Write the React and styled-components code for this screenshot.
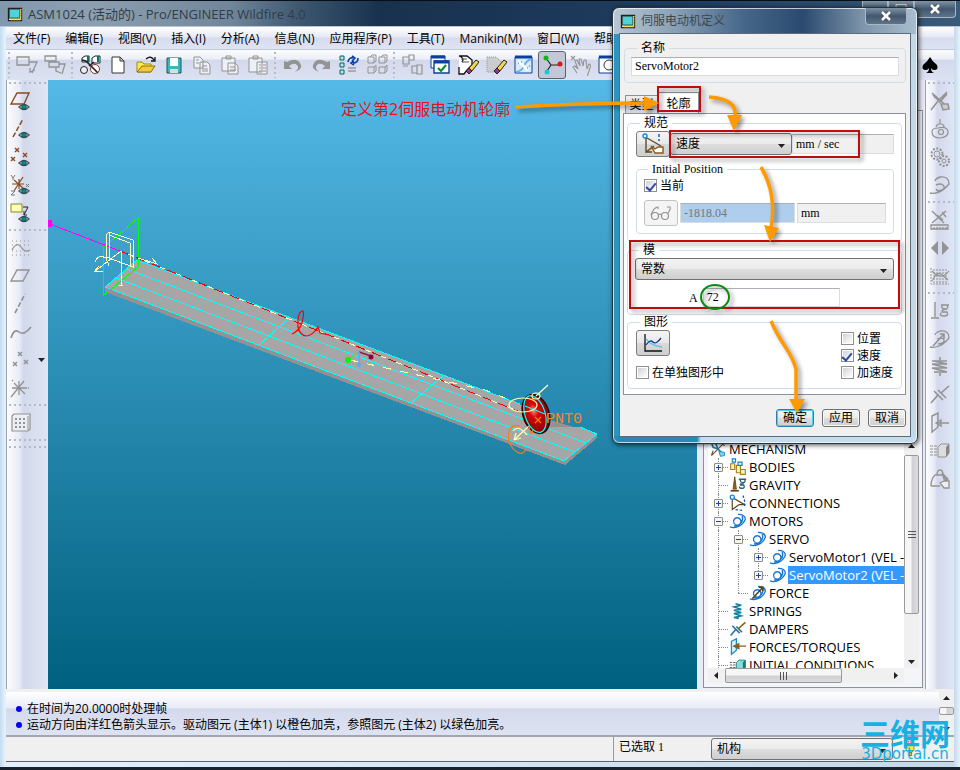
import React from "react";
import styled, { createGlobalStyle, css } from "styled-components";

const UI = `"Open Sans", "Noto Sans CJK SC", sans-serif`;
const FORM = `"Liberation Serif", "Noto Sans CJK SC", serif`;
const LINE = "#8a919c";

const Global = createGlobalStyle`
  * { box-sizing: border-box; }
  html, body { margin: 0; height: 100%; }
  #root { height: 100%; }
  body { font: 12px/16px ${UI}; color: #000; background: #cfe4f5; overflow: hidden; }
  button, input, select { font: inherit; color: inherit; margin: 0; padding: 0; }
  svg { display: block; }
`;

/* ---------- icons ---------- */

const G = "#939393";
const eye = (
  <g>
    <path d="M9 17q5-5 10 0q-5 5-10 0z" fill="#e8eef4" stroke="#555" strokeWidth="1.4" />
    <circle cx="14" cy="17" r="2.4" fill="#078a8a" stroke="#034" strokeWidth=".6" />
  </g>
);
const motorPath = "M1 18q4 2 10 0t9-9q0-6-9-6M10 7a4.500 4.500 0 1 0 .1 0M16 5q2 4-1 8t-9 4";
const drawings = {
  sketchFlat: <path d="M1 3h12v8H1zM13 8h8l-5 11M14 14v4l5-2" fill="none" stroke={G} strokeWidth="1.300" />,
  sketchStack: <path d="M1 2h11v5H1zM5 7v6h10V8H5M15 10h6l-3 10M12 13v4l5 2" fill="none" stroke={G} strokeWidth="1.300" />,
  find: (
    <g stroke="#222">
      <path d="M3 4l3-2h4v6H3zM13 4l3-2h5v7h-8z" fill="#fff" />
      <path d="M9 2v6M19 2v6" stroke="#077" strokeWidth="2" />
      <circle cx="5" cy="16" r="3.500" fill="#eee" />
      <circle cx="16" cy="15" r="4.500" fill="#fff" stroke="#833" />
      <path d="M3 6l4 1 12 12M10 12l5-4" fill="none" strokeWidth="1.600" />
    </g>
  ),
  newFile: <path d="M5 3h8l4 4v12H5zM13 3v4h4" fill="#fff" stroke="#333" />,
  open: (
    <g>
      <path d="M2 18V8h5l2 2h7v8z" fill="#ffe94a" stroke="#a08a10" />
      <path d="M2 18l5-6h13l-4 6z" fill="#f3c93c" stroke="#8a7410" />
      <path d="M11 5q5-4 8 1m1-3v4h-4" fill="none" stroke="#111" strokeWidth="1.300" />
    </g>
  ),
  save: (
    <g>
      <path d="M4 4h14v15H4z" fill="#3cb6be" stroke="#255" />
      <path d="M7 4h8v8H7z" fill="#fff" />
      <path d="M7 15h8v4H7z" fill="#ddd" />
    </g>
  ),
  copy: <path d="M3 3h6l3 3v8H3zM9 8h7l3 3v9H9zM5 6h3M5 9h3M11 12h5M11 15h6M11 17h6" fill="#eef0f6" stroke={G} />,
  paste: <path d="M3 4h13v13H3zM7 2h5v3H7zM9 9h7l3 3v8H9zM11 13h5M11 16h6" fill="#eef0f6" stroke={G} />,
  pasteSpecial: <path d="M2 4h13v14H2zM6 2h5v3H6zM10 8h10v12H10zM12 11h2M16 11h3M12 14h2M16 14h3M12 17h2M16 17h3" fill="#eef0f6" stroke={G} />,
  undo: <path d="M2 7v8h8l-3-3q5-4 8-1t-2 7q9-3 5-9t-13-1z" fill={G} />,
  redo: <path d="M20 7v8h-8l3-3q-5-4-8-1t2 7q-9-3-5-9t13-1z" fill={G} />,
  regenerate: (
    <g>
      <path d="M2 2h4v4H2zM2 9h4v4H2zM2 16h4v4H2z" fill="#bfe3e3" stroke="#066" />
      <path d="M10 8q1-5 5-4m-1-2l3 2-3 3M20 4q0 5-5 5m1-2l-3 2 3 2" fill="none" stroke="#0b3fa8" strokeWidth="1.600" />
      <path d="M10 14h8M10 17h8" stroke="#777" />
    </g>
  ),
  models: <path d="M2 3h6v6H2zM13 3h6v6h-6zM2 13h6v6H2zM13 13h6v6h-6zM4 3l2-2h4v6l-2 2M15 3l2-2h4v6l-2 2M8 13l2-2v6l-2 2M19 13l2-2v6l-2 2" fill="none" stroke={G} />,
  layout: <path d="M2 3h6v7H2zM8 1h5v5H8zM2 12h5M11 12h5v7h-5zM16 11h5v9h-5z" fill="none" stroke={G} strokeWidth="1.200" />,
  windows: (
    <g>
      <path d="M2 2h14v12H2z" fill="#fff" stroke="#0b3f9c" />
      <path d="M2 3h14" stroke="#0b3f9c" strokeWidth="3" />
      <path d="M5 7h15v12H5z" fill="#fff" stroke="#0b3f9c" strokeWidth="1.400" />
      <path d="M5 8h15" stroke="#0b3f9c" strokeWidth="3" />
      <path d="M9 14l3 3 5-6" fill="none" stroke="#0a8a2a" strokeWidth="2" />
    </g>
  ),
  erase: (
    <g>
      <path d="M2 2h8l5 4v5l-5 5-3 4H2v-7M2 2q6 2 3 6" fill="#fff" stroke="#111" strokeWidth="1.300" />
      <path d="M4 5h6M5 8h7" stroke="#555" />
      <path d="M12 14l7-8 3 2-7 9z" fill="#f1d84b" stroke="#222" />
      <path d="M12 14l3 3-3 3-3-3z" fill="#a0308a" stroke="#222" />
    </g>
  ),
  eraseOld: (
    <g>
      <path d="M2 3h9l6 5v2l-6 8H2z" fill="#ccc" stroke="#999" strokeDasharray="1 1" />
      <path d="M12 14l7-8 3 2-7 9z" fill="#f1d84b" stroke="#222" />
      <path d="M12 14l3 3-3 3-3-3z" fill="#a0308a" stroke="#222" />
    </g>
  ),
  view: (
    <g>
      <path d="M2 3h17v16H2z" fill="#d6ecfc" stroke="#0b3f9c" />
      <path d="M2 3h17" stroke="#0b3f9c" strokeWidth="3" />
      <path d="M3 18q6-1 8-6t7-7" stroke="#6fb0ea" strokeWidth="2" fill="none" />
      <path d="M5 7l10 9" stroke="#fff" strokeWidth="3" />
      <path d="M5 9h1M8 8h1M14 14h1M16 12h1" stroke="#2f6fc5" />
    </g>
  ),
  spin: (
    <g>
      <path d="M5 4l5 7h8M10 11l-4 6" fill="none" stroke="#222" strokeWidth="1.200" />
      <circle cx="5" cy="4" r="2.500" fill="#12b512" />
      <circle cx="19" cy="10" r="2.500" fill="#e01515" />
      <circle cx="6" cy="18" r="2.500" fill="#17c6d8" />
    </g>
  ),
  hand: <path d="M2 2l4 4M6 2L2 6M8 19l-4-6 2-1 3 3-3-8 2-1 3 6-1-7h2l2 7 1-6h2l1 9 2-5 2 1-4 12" fill="none" stroke={G} strokeWidth="1.100" />,
  zoomIn: (
    <g>
      <path d="M2 3h18v16H2z" fill="#fff" stroke="#0b3f9c" />
      <path d="M2 3h18" stroke="#0b3f9c" strokeWidth="3" />
      <circle cx="12" cy="11" r="5" fill="none" stroke="#333" />
    </g>
  ),
  spade: <path d="M11 3q2 4 7 8q2 5-3 5-2 0-3-2 0 4 3 5H7q3-1 3-5-1 2-3 2-5 0-3-5 5-4 7-8z" fill="#000" />,
  plane: <g><path d="M1 14L7 3h12l-5 11z" fill="none" stroke="#8a4a1c" strokeWidth="1.400" />{eye}</g>,
  axis: <g><path d="M3 19L13 1" fill="none" stroke="#8a4a1c" strokeWidth="1.500" strokeDasharray="5 2" />{eye}</g>,
  points: <g><path d="M5 2l4 4M9 2L5 6M13 7l4 4M17 7l-4 4M1 11l4 4M5 11l-4 4" stroke="#8a4a1c" strokeWidth="1.400" />{eye}</g>,
  csys: <g><path d="M4 17L13 3M2 10h12M4 6l10 9M9 5v10" fill="none" stroke="#8a4a1c" strokeWidth="1.200" /><path d="M1 1l2 3 2-3M3 4v2M1 17h4l-4 4h4M16 10l3 3M19 10l-3 3" fill="none" stroke="#777" />{eye}</g>,
  note: <g><path d="M1 2h11v8H1z" fill="#ffffb8" stroke="#8a8a10" /><path d="M13 5h5l-4 8m0-4v4h3" fill="none" stroke="#222" />{eye}</g>,
  gridCurve: <g fill="none" stroke={G}><path d="M2 4h18M2 8h18M2 14h18M2 18h18" strokeDasharray="1 3" /><path d="M2 13q5-9 9-3t9 3" strokeWidth="1.300" /></g>,
  planeGrey: <path d="M1 16L7 5h12l-6 11z" fill="none" stroke={G} strokeWidth="1.400" />,
  axisGrey: <path d="M5 20L15 1" fill="none" stroke={G} strokeWidth="1.700" strokeDasharray="5 2" />,
  curveGrey: <path d="M1 17q3-10 8-6t12-5" fill="none" stroke={G} strokeWidth="1.600" />,
  pointsGrey: <path d="M8 3l4 4M12 3L8 7M14 11l4 4M18 11l-4 4M3 13l4 4M7 13l-4 4" stroke={G} strokeWidth="1.500" />,
  csysGrey: <path d="M1 20L14 4M2 11h15M4 6l11 11M9 4v14M2 3l1 1M18 11h1" fill="none" stroke={G} strokeWidth="1.300" />,
  calc: <g><path d="M2 4l2-2h16v15l-2 2H2z" fill="#eceef5" stroke={G} strokeWidth="1.200" /><path d="M18 4v14" stroke={G} /><path d="M5 7h11M5 11h11M5 15h11" stroke={G} strokeWidth="2" strokeDasharray="2 2" /></g>,
  mech: <g fill="none" stroke={G} strokeWidth="1.500"><path d="M3 3l9 8 5 5M18 2L9 11l-7 9M4 5q4 5 8 6M12 11l5-7M10 13l8-9" /><path d="M12 14h7l1 5-6 1z" fill="#ccc" /></g>,
  cam: <g fill="none" stroke={G} strokeWidth="1.200"><path d="M3 14q0-4 6-4 8-2 10 3 1 6-8 7-8 0-8-6z" /><circle cx="12" cy="14" r="2.500" /><path d="M7 9q1-3 3-3h2q3 0 3 3M11 1v5" /></g>,
  gears: <g fill="none" stroke={G}><circle cx="8" cy="8" r="5.500" strokeWidth="2" strokeDasharray="2 1.500" /><circle cx="8" cy="8" r="3" /><circle cx="15" cy="15" r="5" strokeWidth="2" strokeDasharray="2 1.500" /><circle cx="15" cy="15" r="2" /></g>,
  motorGrey: <path d="M1 19q4 1 9-1t10-8q0-8-9-7-5 2-5 4M7 11q4-2 7 0 3 3-1 5-5 2-6-1" fill="none" stroke={G} strokeWidth="1.400" />,
  measure: <g fill="none" stroke={G} strokeWidth="1.300"><path d="M3 2l12 12M17 2L3 14M13 3l4 5M8 6l6 5M2 16h17v4H2z" /><path d="M5 18v2M8 18v2M11 18v2M14 18v2M17 18v2" /></g>,
  play: <path d="M9 4v14l-7-7zM13 4v14l7-7z" fill={G} />,
  graphGrey: <g fill="none" stroke={G}><path d="M2 3v16h18M4 5h15M4 8h15M4 11h15M4 14h15M4 17h15" strokeDasharray="2 1" /><path d="M3 16q5-10 9-7t7 6M3 6q9 10 17 0" strokeWidth="1.200" /></g>,
  gravityGrey: <path d="M6 2v15M2 18h8M12 5h8M13 5q-1 4 3 4t2-4M18 9q-5 0-5 3h5q2 4-3 4t-3-3" fill="none" stroke={G} strokeWidth="1.400" />,
  forceGrey: <g fill="none" stroke={G} strokeWidth="1.300"><path d="M1 19q4 1 9-1t10-8q0-8-9-7-5 2-5 4M8 11q6-2 7 1t-6 4" /><path d="M4 18L15 6m-4 0h4v5" strokeWidth="1.600" /></g>,
  springGrey: <path d="M11 1v3M3 5h15M5 5l13 3H3l15 4H3l15 4H5M11 17v3" fill="none" stroke={G} strokeWidth="1.500" />,
  damperGrey: <path d="M2 19l7-8 4 4M5 7l9 9M9 6l8 8M12 9l8-7" fill="none" stroke={G} strokeWidth="1.600" />,
  torqueGrey: <path d="M3 4l6-3v14l-6 5zM7 11h13M7 11l5-3v6z" fill="none" stroke={G} strokeWidth="1.400" />,
  initialGrey: <g><path d="M1 6h7M1 9h7M1 12h7M1 15h7" stroke={G} strokeDasharray="3 1" /><path d="M9 7l3-3h8v9l-3 4H9z" fill="#ddd" stroke={G} /><path d="M17 7l3-3v9l-3 4z" fill="#888" /></g>,
  massGrey: <g fill="none" stroke={G} strokeWidth="1.300"><path d="M2 18q0-7 4-11h8q3 3 3 6M8 7q0-5 3-5t3 5M2 18h9" /><path d="M13 5l6 6-3 3z" fill="#999" /><path d="M11 15l4-2h5v7h-5z" fill="#eee" /></g>,
  root: <g fill="none" stroke="#1c7fb5" strokeWidth="2"><path d="M3 3l5 1 3 7 6 6M3 3l2 6 6 2" /><path d="M3 19L19 3M3 19l2-6M15 3l4 4" stroke="#6b5430" strokeWidth="1.400" /><path d="M12 14l7 1v4l-5 1z" fill="#7fd0f0" strokeWidth="1" /></g>,
  bodies: <g fill="#fff3b0" stroke="#a8831a" strokeWidth="1.400"><path d="M2 7h5v7H2zM9 9h5v9H9zM14 14h6v6h-6z" /><path d="M4 1h4v4H4zM11 5h5v4h-5z" stroke="#1a7fc4" fill="#dff" /></g>,
  gravity: <g fill="none"><path d="M7 1l-2 15h4z" fill="#9a6a1a" stroke="#5c3c08" /><path d="M2 18h10" stroke="#5c3c08" strokeWidth="2" /><path d="M12 4h9M14 4q-1 4 3 4t2-4M18 9q-5 0-4 2h4q2 4-2 4t-3-2" stroke="#2d6078" strokeWidth="1.600" /></g>,
  joint: <g fill="none" strokeWidth="1.500"><path d="M4 5v14l8-6M5 5l14 8M12 13h8" stroke="#5c4a22" /><circle cx="4" cy="4" r="2.500" stroke="#1284e0" fill="#fff" /><path d="M17 2q3 6 2 13M8 19l9 1" stroke="#1254b0" strokeDasharray="3 2" /></g>,
  axisPick: <g fill="none" strokeWidth="1.400"><path d="M4 5v14l8-6M5 5l14 8M4 19h6" stroke="#5c4a22" /><circle cx="3" cy="3" r="2" stroke="#1284e0" fill="#fff" /><path d="M17 1v7" stroke="#1254b0" strokeDasharray="3 2" /><path d="M9 13l4 3 3-2h5v6h-8z" fill="#fff" stroke="#8a5a20" /></g>,
  motor: <path d={motorPath} fill="none" stroke="#1776cf" strokeWidth="1.600" />,
  force: <g fill="none" strokeWidth="1.600"><path d={motorPath} stroke="#1776cf" /><path d="M4 18L17 4m-5 0h5v5" stroke="#5a4210" strokeWidth="2" /></g>,
  spring: <path d="M8 2l7 2-9 2 9 3-9 1 9 3-9 1 9 3-9 2 6 1" fill="none" stroke="#117f9c" strokeWidth="1.900" />,
  damper: <g fill="none" strokeWidth="2"><path d="M2 19l6-7M4 7l9 9M9 8l7 7" stroke="#2a72a4" /><path d="M11 11l9-8" stroke="#8a5e1c" /></g>,
  torque: <g fill="none"><path d="M3 4l6-3v14l-6 5z" stroke="#1a90c4" strokeWidth="1.600" fill="#dff3ff" /><path d="M6 10h15M6 10l6-3v6z" stroke="#8a5e1c" strokeWidth="1.600" fill="#8a5e1c" /></g>,
  initial: <g><path d="M1 8h7M1 11h7M1 14h7" stroke="#444" strokeDasharray="3 1" /><path d="M9 8l3-3h8v9l-3 4H9z" fill="#86dcd8" stroke="#157a80" /><path d="M17 8l3-3v9l-3 4z" fill="#157a80" /></g>,
  glasses: <g fill="none" stroke={G} strokeWidth="1.200"><circle cx="5" cy="14" r="3.500" /><circle cx="15" cy="14" r="3.500" /><path d="M8.500 13q1.500-2 3 0M1 13q3-8 7-8v2M18 11q3-4 2-6h-3" /></g>,
  plot: <g fill="none"><path d="M3 2v17h17" stroke="#111" strokeWidth="1.300" /><path d="M4 7q6 7 16 8" stroke="#55c4e8" strokeWidth="1.300" /><path d="M4 13q4-6 7-3t8-4" stroke="#123a8c" strokeWidth="1.300" /></g>,
  app: <g><path d="M3 4h16v15H3z" fill="#fff6a0" stroke="#222" strokeWidth="1.500" /><path d="M4 5h13v11H4z" fill="#4fd2dc" stroke="#222" /><path d="M18 5v13H5" stroke="#e8d21c" strokeWidth="2" fill="none" strokeDasharray="1 1" /></g>,
  bulb: <g><path d="M8 2h6M6 5h10" stroke="#e85a4a" strokeWidth="2" strokeDasharray="2 1" /><circle cx="11" cy="10" r="5" fill="#ffe93b" stroke="#8a7c10" /><path d="M9 15h4v4H9z" fill="#f0d040" stroke="#66601a" /></g>,
};

const Icon = ({ name, size = 22 }) => (
  <svg width={size} height={size} viewBox="0 0 22 22" aria-hidden="true">{drawings[name]}</svg>
);
const Caret = ({ dir = "down" }) => (
  <svg width="7" height="4" viewBox="0 0 7 4" aria-hidden="true">
    <path d={dir === "up" ? "M0 4h7L3.500 0z" : "M0 0h7L3.500 4z"} fill="#222" />
  </svg>
);
const SideCaret = ({ dir }) => (
  <svg width="4" height="7" viewBox="0 0 4 7" aria-hidden="true">
    <path d={dir === "left" ? "M4 0v7L0 3.500z" : "M0 0v7L4 3.500z"} fill="#222" />
  </svg>
);
const Ridges = ({ across }) => (
  <svg width="8" height="8" viewBox="0 0 8 8" shapeRendering="crispEdges" aria-hidden="true">
    <path d={across ? "M0 0h1v8H0zM3 0h1v8H3zM6 0h1v8H6z" : "M0 0h8v1H0zM0 3h8v1H0zM0 6h8v1H0z"} fill="#555" />
  </svg>
);
const Cross = () => (
  <svg width="12" height="10" viewBox="0 0 12 10" aria-hidden="true">
    <path d="M2 1l8 8M10 1L2 9" stroke="#46525e" strokeWidth="4.500" />
    <path d="M2 1l8 8M10 1L2 9" stroke="#fff" strokeWidth="2.500" />
  </svg>
);

/* ---------- main window ---------- */

const Desktop = styled.div`
  position: relative;
  display: flex;
  flex-direction: column;
  height: 100vh;
  padding: 0 6px 5px;
  background: linear-gradient(90deg, #c3dcf1 0, #e3f1fd 5px, #d3e5f4 50%, #c3d9ea calc(100% - 6px), #e6f3fd 100%);
  border-bottom: 3px solid #18222e;
`;

const TitleBar = styled.header`
  display: flex;
  align-items: center;
  flex: none;
  height: 27px;
  margin: 0 -6px;
  padding: 0 0 0 6px;
  gap: 4px;
  border-top: 1px solid #080e17;
  border-bottom: 1px solid #b5c5d2;
  background: linear-gradient(90deg, #8198ae 0, #8da0b1 90px, #71869a 230px, #3d5770 300px, #18314e 380px, #203e61 700px, #3a5b7a 100%);
  color: #303d49;
  font-size: 13px;
  white-space: nowrap;

  h1 { margin: 0; font: inherit; }
`;

const WindowButtons = styled.div`
  display: flex;
  align-self: flex-start;
  margin: 0 4px 0 auto;
`;

const CaptionButton = styled.button`
  display: grid;
  place-items: center;
  width: ${(p) => (p.$wide ? 42 : 26)}px;
  height: 17px;
  border: 1px solid #aab8c5;
  border-top: 0;
  border-radius: 0 0 4px 4px;
  background: linear-gradient(#7f93a6, #43586e 50%, #5c748b);
  color: #fff;
  line-height: 14px;
`;

const MenuBar = styled.nav`
  display: flex;
  flex: none;
  align-items: center;
  height: 23px;
  padding: 2px 0 0 7px;
  gap: 15px;
  background: linear-gradient(#fff, #e6e9f5 45%, #d6dcee 50%, #dfe4f3);
  border-bottom: 1px solid #c2c8d8;
  white-space: nowrap;
`;

const MenuItem = styled.button`
  border: 0;
  background: none;
`;

const ToolBar = styled.div`
  display: flex;
  flex: none;
  align-items: center;
  height: 30px;
  background: linear-gradient(#fbfcfe, #eceff8 30%, #d3d9ec 34%, #dde2f2);
`;

const Grip = styled.span`
  flex: none;
  ${(p) => p.$across ? css`
    width: 100%;
    height: 7px;
    background: repeating-linear-gradient(90deg, #b5bac6 0 2px, transparent 2px 5px) 2px 2px / 100% 2px no-repeat;
  ` : css`
    width: 7px;
    height: 26px;
    background: repeating-linear-gradient(#b5bac6 0 2px, transparent 2px 5px) 2px 0 / 2px 100% no-repeat;
  `}
`;

const ToolButton = styled.button`
  display: grid;
  place-items: center;
  flex: none;
  width: 28px;
  height: 28px;
  border: ${(p) => (p.$on ? "1px solid #596070" : "0")};
  border-radius: 3px;
  background: ${(p) => (p.$on ? "#c3c8d6" : "none")};
`;

const FarTools = styled.div`
  margin-left: auto;
  padding-right: 10px;
`;

const Workspace = styled.main`
  display: flex;
  flex: 1;
  min-height: 0;
`;

const SideBar = styled.div`
  display: flex;
  flex: none;
  flex-direction: column;
  width: ${(p) => p.$width}px;
  overflow: hidden;
  background: linear-gradient(90deg, #fdfdff, #e8ebf6 30%, #d2d9ec 40%, #dfe5f4);
  border-left: 1px solid #9aa2ae;
`;

const SideRow = styled.div`
  display: flex;
  align-items: center;
  gap: 3px;
`;

const Viewport = styled.section`
  position: relative;
  flex: 1;
  min-width: 0;
  overflow: hidden;
  background: linear-gradient(#54b9e7, #00607f);
`;

const Callout = styled.p`
  position: absolute;
  left: 293px;
  top: 18px;
  margin: 0;
  color: #e8101c;
  font-size: 16px;
  line-height: 22px;
  white-space: nowrap;
`;

const Explorer = styled.aside`
  display: flex;
  flex: none;
  flex-direction: column;
  width: 228px;
  padding: 30px 2px 1px 6px;
  background: #e9ecf5;
`;

const ExplorerFrame = styled.div`
  display: flex;
  flex: 1;
  flex-direction: column;
  justify-content: flex-end;
  min-height: 0;
  padding: 4px 3px 4px 4px;
  border: 1px solid ${LINE};
  background: #f4f5f8;
`;

const TreePane = styled.div`
  display: grid;
  grid-template: 1fr 15px / 1fr 15px;
  height: 243px;
`;

const Tree = styled.ul`
  margin: 0;
  padding: 0;
  overflow: hidden;
  list-style: none;
  background: #fff;
  font-size: 13px;
  line-height: 18px;
  white-space: nowrap;
`;

const TreeRow = styled.li`
  display: flex;
  height: 18px;
`;

const Branch = styled.span`
  position: relative;
  display: grid;
  place-items: center;
  flex: none;
  width: 20px;
  height: 18px;

  &::before {
    content: "";
    position: absolute;
    left: 10px;
    top: 0;
    height: ${(p) => (p.$last ? 9 : 18)}px;
    border-left: 1px dotted #888;
  }
  &::after {
    content: "";
    position: absolute;
    left: 10px;
    right: 0;
    top: 9px;
    border-top: 1px dotted ${(p) => (p.$stub ? "#888" : "transparent")};
  }
`;

const Expander = styled.button`
  position: relative;
  z-index: 1;
  display: grid;
  place-items: center;
  width: 9px;
  height: 9px;
  border: 1px solid #8c8c8c;
  border-radius: 1px;
  background: #f6f6f6;
`;

const TreeIcon = styled.span`
  display: grid;
  place-items: center;
  flex: none;
  width: 20px;
  height: 18px;
`;

const TreeLabel = styled.span`
  padding: 0 1px;
  ${(p) => p.$selected && "background: #3399ff; color: #fff; padding-right: 60px;"}
`;

const Scroll = styled.div`
  display: flex;
  flex-direction: ${(p) => (p.$across ? "row" : "column")};
  align-items: center;
  justify-content: space-between;
  padding: ${(p) => (p.$across ? "0 6px" : "4px 0")};
  background: #f0f0f0;
`;

const Thumb = styled.span`
  display: grid;
  place-items: center;
  border: 1px solid #999;
  border-radius: 2px;
  background: linear-gradient(${(p) => (p.$across ? "180deg" : "90deg")}, #f6f6f6 0 45%, #d0d0d4 55%, #dcdce0);
  width: ${(p) => (p.$across ? "117px" : "15px")};
  height: ${(p) => (p.$across ? "15px" : `${p.$length}px`)};
  margin: ${(p) => (p.$across ? "0 auto 0 7px" : "7px 0 auto")};
`;

const Messages = styled.section`
  display: flex;
  flex: none;
  height: 48px;
  border-top: 3px solid #f0f0f0;
  border-bottom: 2px solid #a2a6b0;
  background: linear-gradient(#fff, #e9ecf6 36%, #d4daec 40%, #dee3f3);

  ul {
    flex: 1;
    margin: 0;
    padding: 9px 0 0 10px;
    list-style: none;
  }
  li { display: flex; align-items: center; gap: 5px; }
  li::before { content: ""; width: 6px; height: 6px; border-radius: 3px; background: #00f; }
`;

const StatusBar = styled.footer`
  display: flex;
  flex: none;
  align-items: center;
  height: 25px;
  border-bottom: 1px solid #5c646f;
  background: #f0f0f0;
  font-family: ${FORM};
`;

const Picked = styled.output`
  width: 98px;
  height: 100%;
  margin-left: auto;
  padding: 2px 5px;
  border-left: 1px solid #999;
`;

const BulbCell = styled.span`
  display: grid;
  place-items: center;
  width: 61px;
  padding-right: 27px;
`;

const Watermark = styled.div`
  position: absolute;
  right: 9px;
  bottom: 4px;
  width: 92px;
  color: #16b1e4;
  font: 700 30px/28px "Noto Sans CJK SC", sans-serif;
  text-align: center;
  pointer-events: none;
  white-space: nowrap;

  small { display: block; font: 15px/17px "DejaVu Sans", sans-serif; }
`;

/* ---------- form parts ---------- */

const Picker = styled.span`
  display: grid;
  align-items: center;
  width: ${(p) => p.$width || "100%"};
  flex: none;

  select {
    grid-area: 1 / 1;
    width: 100%;
    height: 22px;
    padding-left: 5px;
    appearance: none;
    border: 1px solid #707070;
    border-radius: 3px;
    background: linear-gradient(#f3f3f3, #ebebeb 48%, #dddddd 52%, #cfcfcf);
  }
  svg { grid-area: 1 / 1; justify-self: end; margin: 4px 7px 0 0; pointer-events: none; }
`;

const Select = ({ label, value, width }) => (
  <Picker $width={width}>
    <select aria-label={label} defaultValue={value}><option>{value}</option></select>
    <Caret />
  </Picker>
);

/* ---------- dialog ---------- */

const DialogWindow = styled.section`
  position: absolute;
  left: 612px;
  top: 7px;
  display: flex;
  flex-direction: column;
  width: 306px;
  padding: 0 6px 6px;
  border: 1px solid #26343f;
  border-radius: 7px;
  background:
    linear-gradient(90deg, #b7c7d4 0, #8ba2b6 60px, #466789 130px, #2a4a6f 190px, #7d94aa 250px, #a8bed0 100%) top / 100% 26px no-repeat,
    linear-gradient(90deg, #258bb4 0 84px, #c6dcec 88px) bottom / 100% 7px no-repeat,
    linear-gradient(90deg, #2d94bd 50%, #c2d8e6 50%);
  box-shadow: inset 0 0 0 1px rgba(255, 255, 255, 0.7), 1px 1px 5px rgba(0, 0, 0, 0.7);
  font-family: ${FORM};
`;

const DialogTitle = styled.header`
  display: flex;
  align-items: center;
  height: 25px;
  gap: 4px;
  color: #3c4650;
  font: 12px/16px ${UI};

  h2 { margin: 0; font: inherit; }
`;

const DialogBody = styled.form`
  display: flex;
  flex-direction: column;
  padding: 7px 4px 9px 3px;
  border: 1px solid #5d6b78;
  background: #f0f0f0;
`;

const Group = styled.fieldset`
  min-width: 0;
  margin: ${(p) => p.$margin || "0"};
  padding: ${(p) => p.$pad};
  border: 1px solid #d3dde5;
  border-radius: 4px;

  legend { height: 14px; margin-left: ${(p) => p.$indent || 0}px; padding: 0 4px; line-height: 14px; }
`;

const Field = styled.input`
  width: ${(p) => p.$width || "100%"};
  min-width: 0;
  height: ${(p) => p.$height || 19}px;
  padding: 0 3px;
  border: 1px solid #d8dde2;
  border-top-color: #abb0b6;
  background: ${(p) => p.$fill || "#fff"};
  ${(p) => p.$grow && "flex: 1;"}
  ${(p) => p.$dim && "color: #777;"}
`;

const Tabs = styled.div`
  display: flex;
  align-items: flex-end;
  height: 21px;
  margin-top: 9px;
  padding-left: 2px;
`;

const Tab = styled.button`
  width: ${(p) => (p.$active ? 41 : 33)}px;
  height: ${(p) => (p.$active ? 22 : 18)}px;
  margin-bottom: ${(p) => (p.$active ? -1 : 0)}px;
  border: 1px solid ${LINE};
  border-bottom: 0;
  background: ${(p) => (p.$active ? "#fff" : "linear-gradient(#eee, #d6d6d6)")};
  white-space: nowrap;
`;

const Page = styled.div`
  padding: 2px 3px 5px;
  border: 1px solid ${LINE};
  background: #fff;
`;

const Row = styled.div`
  display: flex;
  align-items: center;
  gap: ${(p) => p.$gap || 0}px;
  margin-top: ${(p) => p.$top || 0}px;
`;

const SquareButton = styled.button`
  display: grid;
  place-items: center;
  flex: none;
  width: 34px;
  height: 26px;
  border: 1px solid ${(p) => (p.disabled ? "#bfc3c6" : "#7c7c7c")};
  border-radius: 3px;
  background: ${(p) => (p.disabled ? "#f4f4f4" : "linear-gradient(#f4f4f4, #e8e8e8 48%, #d8d8d8 52%, #cfcfcf)")};
`;

const CheckLabel = styled.label`
  display: flex;
  align-items: center;
  height: 17px;
  gap: 3px;

  input {
    appearance: none;
    width: 13px;
    height: 13px;
    border: 1px solid #8e8f8f;
    background: linear-gradient(135deg, #cfd3d8, #fff) content-box #fff;
    padding: 1px;
    display: grid;
    place-items: center;
  }
  input:checked::after {
    content: "";
    width: 4px;
    height: 8px;
    margin-bottom: 2px;
    border: solid #31489c;
    border-width: 0 2px 2px 0;
    transform: rotate(40deg);
  }
`;

const Check = ({ label, checked }) => (
  <CheckLabel><input type="checkbox" defaultChecked={checked} />{label}</CheckLabel>
);

const PlotOptions = styled.div`
  display: flex;
  align-items: flex-end;
  justify-content: space-between;
`;

const ValueRow = styled.label`
  display: flex;
  align-items: center;
  margin: 8px 54px 0 54px;
  gap: 5px;
`;

const Actions = styled.div`
  display: flex;
  justify-content: flex-end;
  gap: 8px;
  margin-top: 14px;
`;

const ActionButton = styled.button`
  width: 38px;
  height: 18px;
  border: 1px solid ${(p) => (p.$primary ? "#2a7fae" : "#707070")};
  border-radius: 3px;
  background: linear-gradient(#f4f4f4, #ebebeb 48%, #dddddd 52%, #d0d0d0);
  box-shadow: ${(p) => (p.$primary ? "inset 0 0 0 1px #4cd0f5" : "inset 0 0 0 1px #f8f8f8")};
  line-height: 14px;
`;

const Marks = styled.svg`
  position: absolute;
  left: -1px;
  top: -1px;
  overflow: visible;
  pointer-events: none;
  filter: drop-shadow(3px 3px 2px rgba(0, 0, 0, 0.4));
`;

/* Tutorial marks drawn over the dialog, in window coordinates. */
const Annotations = () => (
  <Marks width="306" height="437" viewBox="612 7 306 437" aria-hidden="true">
    <g fill="none" stroke="#c00b10" strokeWidth="2">
      <path d="M658 87h42v24h-42zM670 131h189v26H670zM630 241h269v67H630z" />
    </g>
    <ellipse cx="715" cy="297" rx="14" ry="12" fill="none" stroke="#0a8a14" strokeWidth="2" />
    <g fill="none" stroke="#ff9900" strokeWidth="3.500">
      <path d="M516 107Q580 103 646 103" />
      <path d="M709 97Q738 99 735 117" />
      <path d="M761 167Q777 194 771 228" />
      <path d="M771 321C781 345 791 350 796 369V400" />
    </g>
    <g fill="#ff9900">
      <path d="M644 96l15 7-15 8zM727 115h15l-8 16zM764 225l15 3-9 14zM789 399h16l-8 14z" />
    </g>
  </Marks>
);

const MotorDialog = () => (
  <DialogWindow role="dialog" aria-label="伺服电动机定义">
    <DialogTitle>
      <Icon name="app" size={18} />
      <h2>伺服电动机定义</h2>
      <WindowButtons>
        <CaptionButton $wide aria-label="关闭"><Cross /></CaptionButton>
      </WindowButtons>
    </DialogTitle>
    <DialogBody onSubmit={(e) => e.preventDefault()}>
      <Group $pad="2px 6px 6px" $margin="0 0 0 1px" $indent={6}>
        <legend>名称</legend>
        <Field aria-label="名称" defaultValue="ServoMotor2" />
      </Group>
      <Tabs role="tablist">
        <Tab type="button" role="tab">类型</Tab>
        <Tab type="button" role="tab" $active aria-selected="true">轮廓</Tab>
      </Tabs>
      <Page role="tabpanel">
        <Group $pad="1px 7px 7px 8px" $indent={4}>
          <legend>规范</legend>
          <Row>
            <SquareButton type="button" aria-label="选取轴"><Icon name="axisPick" /></SquareButton>
            <Select label="规范" value="速度" width="122px" />
            <Field aria-label="单位" readOnly defaultValue="mm / sec" $grow $fill="#f0f0f0" $height={20} />
          </Row>
          <Group $pad="1px 7px 7px 7px" $margin="5px 0 0" $indent={4}>
            <legend>Initial Position</legend>
            <Check label="当前" checked />
            <Row $gap={2} $top={6}>
              <SquareButton type="button" disabled aria-label="预览"><Icon name="glasses" /></SquareButton>
              <Field aria-label="初始位置" readOnly defaultValue="-1818.04" $width="115px" $fill="#afcdec" $dim $height={20} />
              <Field aria-label="位置单位" readOnly defaultValue="mm" $grow $fill="#f0f0f0" $height={20} />
            </Row>
          </Group>
        </Group>
        <Group $pad="1px 7px 7px" $margin="1px 0 0" $indent={4}>
          <legend>模</legend>
          <Select label="模" value="常数" />
          <ValueRow>A<Field defaultValue="72" $grow /></ValueRow>
        </Group>
        <Group $pad="1px 8px 7px" $indent={4}>
          <legend>图形</legend>
          <PlotOptions>
            <div>
              <SquareButton type="button" aria-label="图形"><Icon name="plot" /></SquareButton>
              <Row $top={8}><Check label="在单独图形中" /></Row>
            </div>
            <div>
              <Check label="位置" />
              <Check label="速度" checked />
              <Check label="加速度" />
            </div>
          </PlotOptions>
        </Group>
      </Page>
      <Actions>
        <ActionButton $primary>确定</ActionButton>
        <ActionButton type="button">应用</ActionButton>
        <ActionButton type="button">取消</ActionButton>
      </Actions>
    </DialogBody>
    <Annotations />
  </DialogWindow>
);

/* ---------- model drawing ---------- */

const Model = () => (
  <svg width="649" height="609" viewBox="48 80 649 609" role="img" aria-label="装配模型">
    <defs>
      <radialGradient id="ball" cx=".45" cy=".4" r=".7">
        <stop offset="0" stopColor="#ff8a80" />
        <stop offset=".25" stopColor="#d80808" />
        <stop offset=".8" stopColor="#8c0000" />
        <stop offset="1" stopColor="#300" />
      </radialGradient>
    </defs>
    <g shapeRendering="crispEdges">
      <path d="M105 287v5L565 465l32-27v-4z" fill="#929292" />
      <path d="M137 260L545 414v13h35l17 7-33 27L105 287z" fill="#a6a6a6" />
      <path d="M137 260L520 404M105 287L564 461l33-27-17-7M105 287l32-27M127 269L586 443M116 278L575 452M288 319l-29 26M443 376l-32 27" fill="none" stroke="#00ffff" />
      <path d="M50 224L120 251" stroke="#ff00ff" fill="none" />
      <path d="M48 220h4v7h-4z" fill="#ff00ff" />
      <path d="M120 251L520 412" fill="none" stroke="#fffcb0" strokeDasharray="7 10" strokeDashoffset="9" />
      <path d="M120 251L520 412" fill="none" stroke="#f00000" strokeDasharray="9 8" />
      <path d="M350 360l135 30 30 12" fill="none" stroke="#fffcb0" strokeDasharray="8 9" />
      <path d="M103 296V248l35-30v49z" fill="none" stroke="#00ff00" />
      <path d="M106 235l3-3 24 8v27l-27-10zM109 232v26l24 9M109 235l21 8v24M121 251v34M119 285h4M95 262q3-8 11-4l3 8M94 272l27-21M94 272l5-6M94 272l9-1M138 258l19 6-5-6" fill="none" stroke="#fffcb0" />
    </g>
    <path d="M292 334q7-3 10-11 3-13 0-12-5 2-4 16 2 9 9 9 6-1 11-9l2 6 9 2" fill="none" stroke="#f00" strokeWidth="1.200" />
    <path d="M348 360l11-8" stroke="#4bdc1c" />
    <path d="M359 352l12 4" stroke="#902040" strokeWidth="1.500" />
    <path d="M359 352v12" stroke="#58aaff" strokeWidth="1.500" />
    <circle cx="348" cy="360" r="3" fill="#00f800" />
    <circle cx="371" cy="357" r="2.500" fill="#900030" />
    <circle cx="359" cy="365" r="2" fill="#58aaff" />
    <ellipse cx="536" cy="414" rx="13" ry="20" transform="rotate(-18 536 414)" fill="url(#ball)" stroke="#260000" strokeWidth="1.500" />
    <g fill="none" strokeWidth="1.200">
      <ellipse cx="535" cy="414" rx="10" ry="19" transform="rotate(-18 535 414)" stroke="#00ffff" />
      <path d="M525 406l20 8" stroke="#00ffff" />
      <ellipse cx="523" cy="405" rx="14" ry="7" stroke="#ffffb0" />
      <path d="M536 396l12-11M532 396a4 3 0 1 1 8 0a4 3 0 1 1-8 0M514 440l15-14M514 440l2-7M514 440l7-2M513 431q5-7 14 4" stroke="#ffffb0" />
      <path d="M519 425c-15 1-13 20-2 27q6 4 9-3M509 432q1-8 11-6M533 430q-2 8-4-4M535 423l6-6M535 417l6 6" stroke="#ff7a10" />
    </g>
    <text x="546" y="423" fill="#ff8518" fontFamily="Liberation Mono, monospace" fontSize="15">PNT0</text>
  </svg>
);

/* ---------- data ---------- */

const menus = ["文件(F)", "编辑(E)", "视图(V)", "插入(I)", "分析(A)", "信息(N)", "应用程序(P)", "工具(T)", "Manikin(M)", "窗口(W)", "帮助(H)"];
const topTools = [
  ["sketchFlat", "sketchStack"],
  ["find", "newFile", "open", "save", "copy", "paste", "pasteSpecial"],
  ["undo", "redo", "regenerate", "models"],
  ["layout", "windows", "erase", "eraseOld", "view", "spin", "hand", "zoomIn"],
];
const leftTools = [
  ["plane", "axis", "points", "csys", "note"],
  ["gridCurve", "planeGrey", "axisGrey", "curveGrey", "pointsGrey", "csysGrey"],
  ["calc"],
  [],
];
const rightTools = [
  ["mech", "cam", "gears", "motorGrey"],
  ["measure", "play", "graphGrey"],
  ["gravityGrey", "forceGrey", "springGrey", "damperGrey", "torqueGrey", "initialGrey", "massGrey"],
];
/* guides: v = passing line, t = tee, l = last child, + / - = expander, p = expander on a last child */
const tree = [
  { text: "MECHANISM", icon: "root", guides: "" },
  { text: "BODIES", icon: "bodies", guides: "+" },
  { text: "GRAVITY", icon: "gravity", guides: "t" },
  { text: "CONNECTIONS", icon: "joint", guides: "+" },
  { text: "MOTORS", icon: "motor", guides: "-" },
  { text: "SERVO", icon: "motor", guides: "v-" },
  { text: "ServoMotor1 (VEL - ANGLE)", icon: "motor", guides: "vv+" },
  { text: "ServoMotor2 (VEL - ANGLE)", icon: "motor", guides: "vvp", selected: true },
  { text: "FORCE", icon: "force", guides: "vl" },
  { text: "SPRINGS", icon: "spring", guides: "t" },
  { text: "DAMPERS", icon: "damper", guides: "t" },
  { text: "FORCES/TORQUES", icon: "torque", guides: "t" },
  { text: "INITIAL CONDITIONS", icon: "initial", guides: "t" },
];

const Guide = ({ kind }) => {
  const expander = "+-p".includes(kind);
  return (
    <Branch $last={"lp".includes(kind)} $stub={kind !== "v"}>
      {expander && (
        <Expander aria-label={kind === "-" ? "折叠" : "展开"}>
          <svg width="5" height="5" viewBox="0 0 5 5" shapeRendering="crispEdges">
            <path d={kind === "-" ? "M0 2h5v1H0z" : "M0 2h5v1H0zM2 0h1v5H2z"} fill="#24439c" />
          </svg>
        </Expander>
      )}
    </Branch>
  );
};

export default function App() {
  return (
    <Desktop>
      <Global />
      <TitleBar>
        <Icon name="app" size={18} />
        <h1>ASM1024 (活动的) - Pro/ENGINEER Wildfire 4.0</h1>
        <WindowButtons>
          <CaptionButton aria-label="最小化">–</CaptionButton>
          <CaptionButton aria-label="最大化">□</CaptionButton>
          <CaptionButton $wide aria-label="关闭"><Cross /></CaptionButton>
        </WindowButtons>
      </TitleBar>
      <MenuBar>{menus.map((m) => <MenuItem key={m}>{m}</MenuItem>)}</MenuBar>
      <ToolBar>
        {topTools.map((group, i) => (
          <React.Fragment key={i}>
            <Grip />
            {group.map((n) => <ToolButton key={n} aria-label={n} $on={n === "spin"}><Icon name={n} /></ToolButton>)}
          </React.Fragment>
        ))}
        <FarTools><ToolButton aria-label="spade"><Icon name="spade" /></ToolButton></FarTools>
      </ToolBar>
      <Workspace>
        <SideBar $width={42}>
          {leftTools.map((group, i) => (
            <React.Fragment key={i}>
              <Grip $across />
              {group.map((n) => (
                <SideRow key={n}>
                  <ToolButton aria-label={n}><Icon name={n} /></ToolButton>
                  {n === "pointsGrey" && <Caret />}
                </SideRow>
              ))}
            </React.Fragment>
          ))}
          <Grip $across />
        </SideBar>
        <Viewport>
          <Model />
          <Callout>定义第2伺服电动机轮廓</Callout>
        </Viewport>
        <Explorer>
          <ExplorerFrame>
            <TreePane>
              <Tree>
                {tree.map((row) => (
                  <TreeRow key={row.text}>
                    {[...row.guides].map((g, i) => <Guide key={i} kind={g} />)}
                    <TreeIcon><Icon name={row.icon} size={18} /></TreeIcon>
                    <TreeLabel $selected={row.selected}>{row.text}</TreeLabel>
                  </TreeRow>
                ))}
              </Tree>
              <Scroll><Caret dir="up" /><Thumb $length={159}><Ridges /></Thumb><Caret /></Scroll>
              <Scroll $across><SideCaret dir="left" /><Thumb $across><Ridges across /></Thumb><SideCaret dir="right" /></Scroll>
            </TreePane>
          </ExplorerFrame>
        </Explorer>
        <SideBar $width={29}>
          {rightTools.map((group, i) => (
            <React.Fragment key={i}>
              <Grip $across />
              {group.map((n) => <ToolButton key={n} aria-label={n}><Icon name={n} /></ToolButton>)}
            </React.Fragment>
          ))}
        </SideBar>
      </Workspace>
      <Messages>
        <ul>
          <li>在时间为20.0000时处理帧</li>
          <li>运动方向由洋红色箭头显示。驱动图元 (主体1) 以橙色加亮，参照图元 (主体2) 以绿色加亮。</li>
        </ul>
        <Scroll><Caret dir="up" /><Thumb $length={8} /><Caret /></Scroll>
      </Messages>
      <StatusBar>
        <Picked>已选取 1</Picked>
        <Select label="过滤器" value="机构" width="182px" />
        <BulbCell><Icon name="bulb" size={18} /></BulbCell>
      </StatusBar>
      <MotorDialog />
      <Watermark>三维网<small>3Dportal.cn</small></Watermark>
    </Desktop>
  );
}
